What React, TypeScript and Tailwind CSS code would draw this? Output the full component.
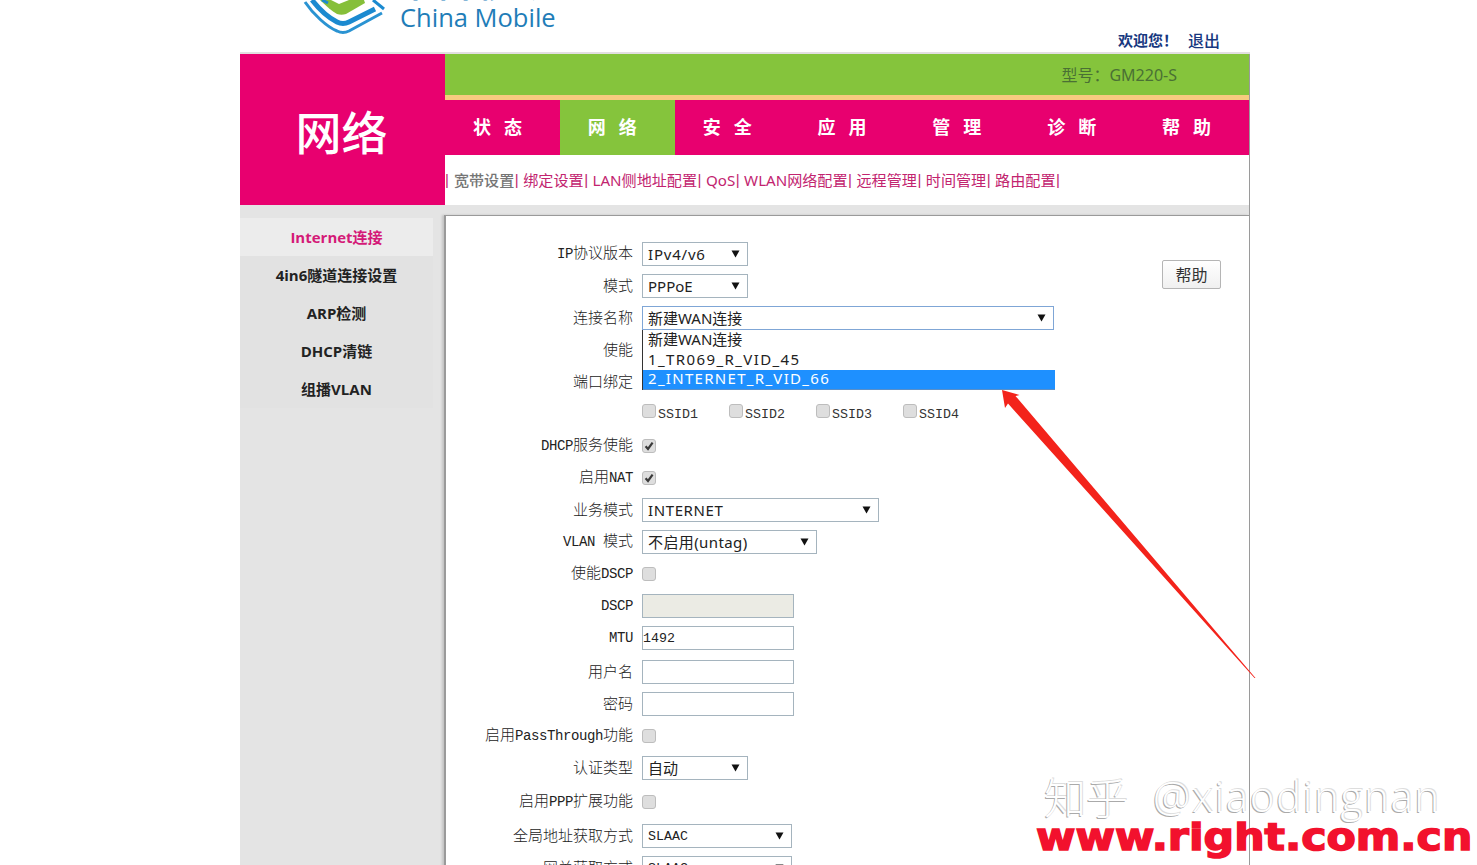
import type { ReactNode } from "react";

const navItems = ["状态", "网络", "安全", "应用", "管理", "诊断", "帮助"];
const subNav = ["宽带设置", "绑定设置", "LAN侧地址配置", "QoS", "WLAN网络配置", "远程管理", "时间管理", "路由配置"];
const sideItems = ["Internet连接", "4in6隧道连接设置", "ARP检测", "DHCP清链", "组播VLAN"];
const uiFont = "font-['Noto_Sans','Noto_Sans_CJK_SC',sans-serif]";
const monoFont = "font-['Liberation_Mono',monospace]";

function Select({
  width,
  value,
  small,
  track = "",
  focus,
}: {
  width: string;
  value: string;
  small?: boolean;
  track?: string;
  focus?: boolean;
}) {
  return (
    <div
      className={`relative h-6 ${width} border ${focus ? "border-[#7fa6d6]" : "border-[#a5b4be]"} bg-white pl-[5px] text-[#222] ${track} ${
        small ? `${monoFont} text-[13.3px] leading-[24px]` : `${uiFont} text-[15px] leading-[22px]`
      }`}
    >
      {value}
      <svg width="9" height="8" viewBox="0 0 9 8" className="absolute top-[7px] right-[7px]">
        <path d="M0.5 0.5h8L4.5 7.5z" fill="#111" />
      </svg>
    </div>
  );
}

function Check({ checked }: { checked?: boolean }) {
  return (
    <span className="flex h-[14px] w-[14px] shrink-0 items-center justify-center rounded-[3px] border border-[#bdbdbd] bg-[#dedede]">
      {checked && (
        <svg width="10" height="10" viewBox="0 0 10 10">
          <path d="M1.6 5.2 4 8 8.6 1.6" fill="none" stroke="#3a3a3a" strokeWidth="2.2" />
        </svg>
      )}
    </span>
  );
}

function TextBox({ value, disabled }: { value?: string; disabled?: boolean }) {
  return (
    <div className={`h-6 w-[152px] border border-[#a5b4be] ${monoFont} text-[13.3px] leading-[23px] text-[#222] ${disabled ? "bg-[#ebebe4]" : "bg-white"}`}>
      {value}
    </div>
  );
}

// labels mix a 15px CJK face with a narrower latin one, like the router's page
function Label({ text }: { text: string }) {
  return (
    <>
      {text.split(/([A-Za-z ]+)/).map((part, i) =>
        /[A-Za-z ]/.test(part) ? (
          <span key={i} className={`${monoFont} text-[14px] tracking-[-0.4px]`}>{part}</span>
        ) : (
          <span key={i}>{part}</span>
        ),
      )}
    </>
  );
}

function Row({ label, children, top }: { label?: string; children?: ReactNode; top?: string }) {
  return (
    <div className={`flex h-8 items-center ${top ?? ""}`}>
      <div className="w-[187px] shrink-0 whitespace-pre pb-[2px] text-right font-['Noto_Sans_CJK_SC',sans-serif] text-[15px] font-light text-[#222]">
        {label && <Label text={label} />}
      </div>
      <div className="ml-[9px] flex items-center">{children}</div>
    </div>
  );
}

function Logo() {
  return (
    <div className="ml-[63px] flex h-full items-start overflow-hidden">
      <svg width="84" height="36" viewBox="0 0 84 36" className="shrink-0">
        <path d="M2 2C10 14 24 27 34 31c4 2 8 2 12 0L79 13" fill="none" stroke="#2a93d2" strokeWidth="3" />
        <path d="M9 0c7 9 17 18 25 22 4 2 8 2 12 0L72 9" fill="none" stroke="#1b8ad0" strokeWidth="5" />
        <path d="M17 0c6 6 12 11 17 14 3 1 6 1 9 0L62 3 61 0z" fill="#86bf3a" />
        <path d="M28 0 36 4 46 0z" fill="#fff" />
        <path d="M19 0 25 3" fill="none" stroke="#1b8ad0" strokeWidth="3" />
        <path d="M70 0 81 9" fill="none" stroke="#1b8ad0" strokeWidth="3" />
      </svg>
      <div className="ml-[13px] flex flex-col items-start">
        <span className="mt-[-28px] font-['Noto_Sans_CJK_SC',sans-serif] text-[31px] leading-[24px] font-bold tracking-[8px] text-[#1b7fbd]">
          中国移动
        </span>
        <span className="mt-[6px] font-['Open_Sans',sans-serif] text-[25.5px] leading-[30px] text-[#1f7db8]">
          China Mobile
        </span>
      </div>
    </div>
  );
}

export default function App() {
  return (
    <div className="relative h-[865px] w-[1477px] overflow-hidden bg-white">
      <div className="ml-[240px] w-[1010px]">
        <header className="flex h-[52px] justify-between">
          <Logo />
          <div className="mr-[30px] flex items-end gap-[10px] pb-[2px] font-['Noto_Sans_CJK_SC',sans-serif] text-[15px] leading-[20px] font-bold text-[#17387f]">
            <span>欢迎您！</span>
            <span className="text-[16px] font-medium">退出</span>
          </div>
        </header>

        <div className="flex border-t-2 border-[#e2dfe0]">
          <aside className="w-[205px] shrink-0">
            <div className="flex h-[151px] items-center justify-center bg-[#e8006f] pt-[1px] pr-[2px] font-['Noto_Sans_CJK_SC',sans-serif] text-[46px] font-medium text-white">
              网络
            </div>
            <div className="h-[700px] bg-[#e4e4e4] pt-[13px]">
              <div className="w-[193px]">
                {sideItems.map((item, i) => (
                  <div
                    key={item}
                    className={`flex h-[38px] items-center justify-center font-['Open_Sans','Noto_Sans_CJK_SC',sans-serif] text-[15px] font-bold ${
                      i === 0 ? "bg-[#ececec] text-[#d41a78]" : "bg-[#e2e2e2] text-[#222]"
                    }`}
                  >
                    {item}
                  </div>
                ))}
              </div>
            </div>
          </aside>

          <main className="w-[805px] border-r border-[#9a9a9a]">
            <div className="flex h-[41px] items-center justify-end bg-[#85c43c] pr-[72px] font-['Noto_Sans','Noto_Sans_CJK_SC',sans-serif] text-[16px] text-[#4a7034]">
              型号：GM220-S
            </div>
            <div className="h-[5px] bg-[#f7cb7f]" />
            <nav className="flex h-[55px] bg-[#e8006f]">
              {navItems.map((item, i) => (
                <div
                  key={item}
                  className={`flex w-[115px] items-center justify-center gap-[13px] pr-[10px] pb-[2px] font-['Noto_Sans_CJK_SC',sans-serif] text-[18px] font-bold text-white ${
                    i === 1 ? "bg-[#85c43c]" : ""
                  }`}
                >
                  <span>{item[0]}</span>
                  <span>{item[1]}</span>
                </div>
              ))}
            </nav>
            <div className="flex h-[50px] items-center whitespace-pre font-['Noto_Sans','Noto_Sans_CJK_SC',sans-serif] text-[15.1px] text-[#c2246f]">
              <span className="mr-[5px] font-['Liberation_Sans',sans-serif]">|</span>
              {subNav.map((item, i) => (
                <span key={item} className="flex items-center">
                  <span className={i === 0 ? "font-medium text-[#757575]" : ""}>{item}</span>
                  <span className="mr-[4.5px] ml-[0.5px] font-['Liberation_Sans',sans-serif]">|</span>
                </span>
              ))}
            </div>
            <div className="h-[10px] bg-[#e4e4e4]" />
            <div className="-ml-[1px] flex border-t border-l-2 border-[#9a9a9a] pt-[22px] shadow-[-2px_0_2px_#c4c4c4]">
              <div className="w-[716px]">
                <Row label="IP协议版本"><Select width="w-[106px]" value="IPv4/v6" track="tracking-[0.8px]" /></Row>
                <Row label="模式"><Select width="w-[106px]" value="PPPoE" /></Row>
                <Row label="连接名称"><Select width="w-[412px]" value="新建WAN连接" focus /></Row>
                <Row label="使能" />
                <Row label="端口绑定" />
                <Row>
                  <div className="flex">
                    {["SSID1", "SSID2", "SSID3", "SSID4"].map((s) => (
                      <div key={s} className="-mt-[1px] flex w-[87px]">
                        <Check />
                        <span className={`mt-[3px] ml-[2px] ${monoFont} text-[13.3px] leading-[16px] text-[#333]`}>{s}</span>
                      </div>
                    ))}
                  </div>
                </Row>
                <Row label="DHCP服务使能"><Check checked /></Row>
                <Row label="启用NAT"><Check checked /></Row>
                <Row label="业务模式"><Select width="w-[237px]" value="INTERNET" track="tracking-[0.6px]" /></Row>
                <Row label="VLAN 模式"><Select width="w-[175px]" value="不启用(untag)" track="tracking-[0.4px]" /></Row>
                <Row label="使能DSCP"><Check /></Row>
                <Row label="DSCP"><TextBox disabled /></Row>
                <Row label="MTU"><TextBox value="1492" /></Row>
                <Row label="用户名" top="mt-[2px]"><TextBox /></Row>
                <Row label="密码"><TextBox /></Row>
                <Row label="启用PassThrough功能"><Check /></Row>
                <Row label="认证类型"><Select width="w-[106px]" value="自动" /></Row>
                <Row label="启用PPP扩展功能" top="mt-[2px]"><Check /></Row>
                <Row label="全局地址获取方式" top="mt-[2px]"><Select width="w-[150px]" value="SLAAC" small /></Row>
                <Row label="网关获取方式"><Select width="w-[150px]" value="SLAAC" small /></Row>
              </div>
              <button className="mt-[22px] h-[29px] w-[59px] rounded-[2px] border border-[#b5b5b5] bg-gradient-to-b from-white to-[#f0f0f0] pb-[2px] font-['Noto_Sans_CJK_SC',sans-serif] text-[16px] text-[#333]">
                帮助
              </button>
            </div>
          </main>
        </div>
      </div>

      {/* open dropdown list */}
      <div className={`absolute top-[330px] left-[642px] w-[413px] border-l border-[#333] bg-white ${uiFont} text-[15px] text-[#222]`}>
        <div className="h-5 pl-[5px] leading-[19px]">新建WAN连接</div>
        <div className="h-5 pl-[5px] leading-[19px] tracking-[1.4px]">1_TR069_R_VID_45</div>
        <div className="h-5 border-b border-[#5a8fc8] bg-[#1e90ff] pl-[5px] leading-[17px] tracking-[1.3px] text-white">2_INTERNET_R_VID_66</div>
      </div>

      {/* red annotation arrow */}
      <svg width="1477" height="865" className="pointer-events-none absolute top-0 left-0">
        <path d="M1002 390 1019.5 395 1015.5 396 1255.5 678 1254.5 678 1008 403.5 1005 408z" fill="#f3231b" />
      </svg>

      {/* watermarks */}
      <div className="absolute top-[768px] left-[1044px] flex font-['Noto_Sans_CJK_SC',sans-serif] text-[42px] leading-[56px] font-light whitespace-pre text-white [text-shadow:-1px_1px_0_#aaa,1px_-1px_0_#ddd]">
        <span>知乎</span>
        <span className="ml-[25px] font-['Open_Sans',sans-serif] tracking-[1.7px]">@xiaodingnan</span>
      </div>
      <div className="absolute top-[812px] left-[1036px] origin-left scale-x-[1.124] font-['DejaVu_Sans',sans-serif] text-[38px] leading-[50px] font-bold whitespace-pre text-[#f2112d] [-webkit-text-stroke:1.5px_#f2112d]">
        www.right.com.cn
      </div>
    </div>
  );
}
